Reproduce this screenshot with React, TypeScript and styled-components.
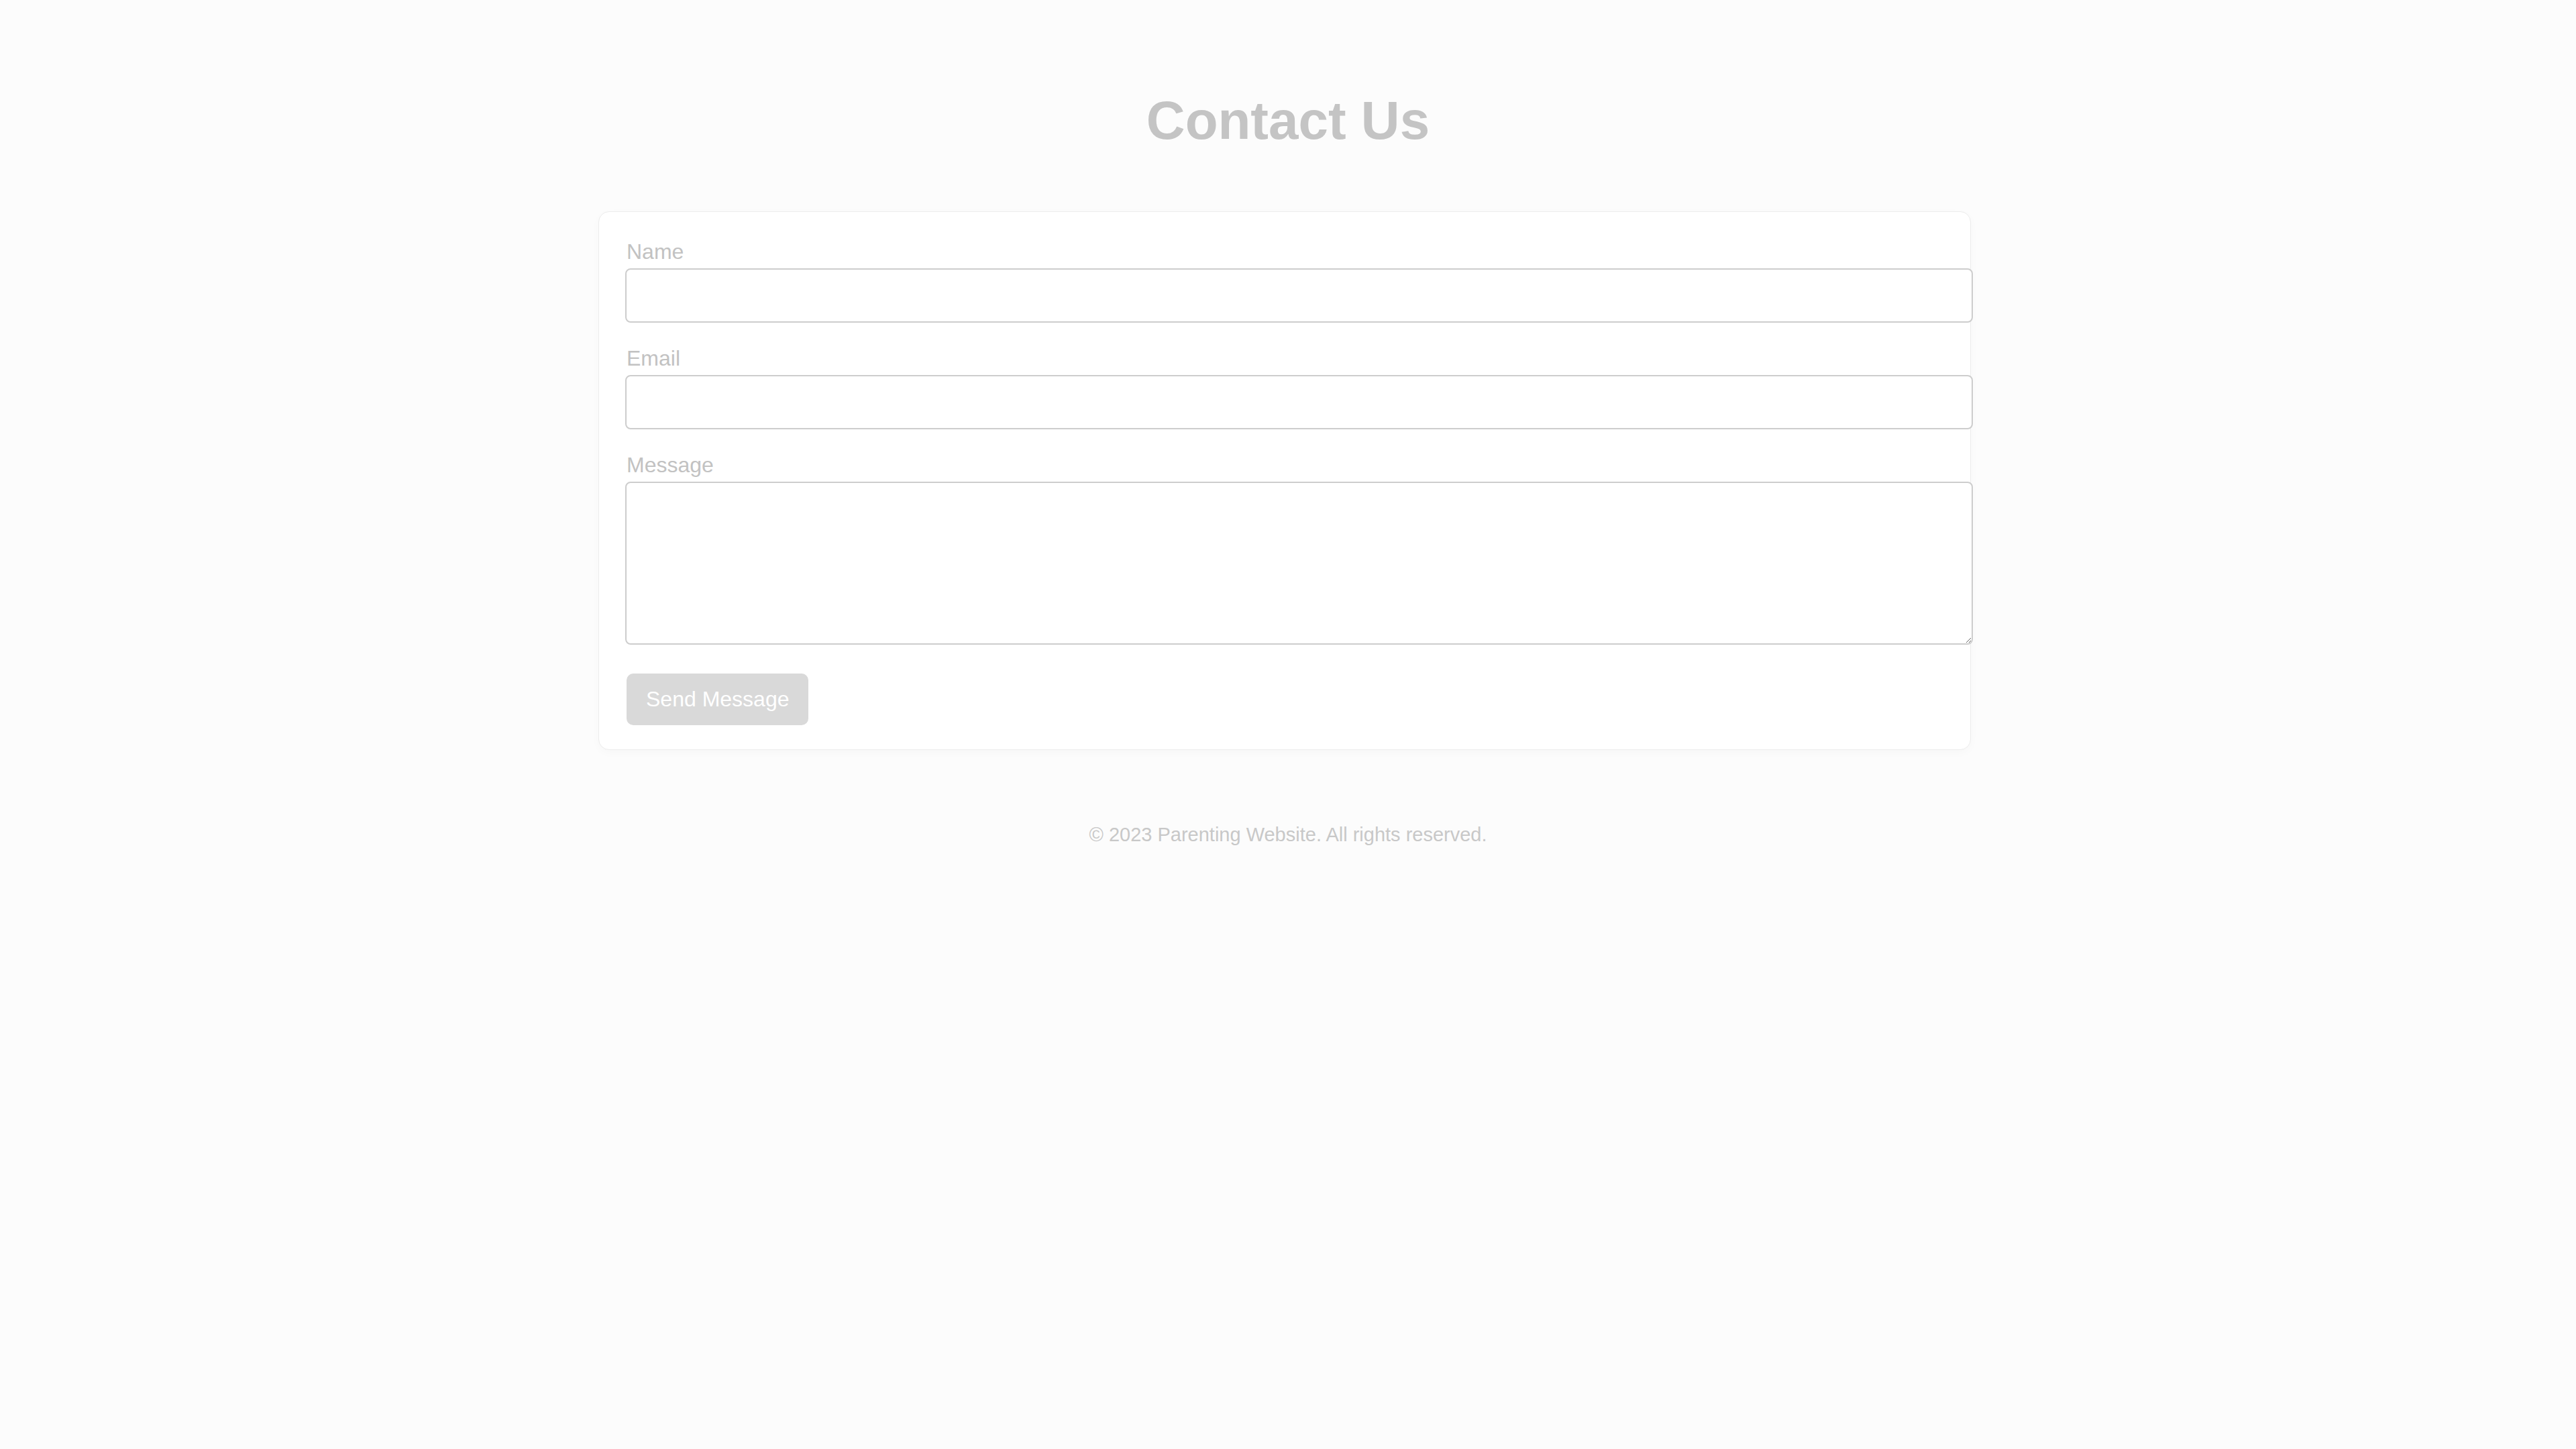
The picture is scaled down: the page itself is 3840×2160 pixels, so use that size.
import styled, { createGlobalStyle } from "styled-components";

const GlobalStyle = createGlobalStyle`
    html, body {
        margin: 0;
        padding: 0;
        background: #fcfcfc;
        font-family: "Liberation Sans", Arial, sans-serif;
    }
`;

const StyledPage = styled.div`
    min-height: 2160px;
    display: flex;
    flex-direction: column;
    align-items: center;
    padding-top: 134px;
    box-sizing: border-box;
`;

const StyledTitle = styled.h1`
    margin: 0 0 89px 0;
    font-size: 80px;
    font-weight: 700;
    line-height: 92px;
    color: #c4c4c4;
    text-align: center;
`;

const StyledCard = styled.form`
    width: 2046px;
    box-sizing: border-box;
    margin-right: 10px;
    padding: 41px 40px 36px 39px;
    background: #ffffff;
    border: 1px solid #ececec;
    border-radius: 16px;
    box-shadow: 0 4px 14px rgba(0, 0, 0, 0.025);
    display: flex;
    flex-direction: column;
`;

const StyledField = styled.div`
    display: flex;
    flex-direction: column;
    margin-bottom: 35px;
`;

const StyledLabel = styled.label`
    font-size: 32px;
    line-height: 37px;
    color: #c2c2c2;
    margin-bottom: 6px;
    padding-left: 2px;
`;

const StyledInput = styled.input`
    width: 100%;
    padding: 20px;
    font-size: 32px;
    line-height: 37px;
    font-family: "Liberation Sans", Arial, sans-serif;
    border: 2px solid #cdcdcd;
    border-radius: 8px;
    background: #ffffff;
    outline: none;
`;

const StyledTextArea = styled.textarea<{ h: number }>`
    width: 100%;
    height: ${(props) => props.h}px;
    padding: 20px;
    font-size: 32px;
    font-family: "Liberation Sans", Arial, sans-serif;
    border: 2px solid #cdcdcd;
    border-radius: 8px;
    background: #ffffff;
    outline: none;
    resize: vertical;
    display: block;
`;

const StyledButton = styled.button`
    align-self: flex-start;
    margin-top: 8px;
    margin-left: 2px;
    background: #d9d9d9;
    color: #ffffff;
    border: none;
    border-radius: 10px;
    padding: 20px 29px;
    font-size: 32px;
    line-height: 37px;
    font-family: "Liberation Sans", Arial, sans-serif;
    cursor: pointer;
`;

const StyledFooter = styled.footer`
    margin-top: 110px;
    font-size: 29px;
    line-height: 33px;
    color: #c8c8c8;
    text-align: center;
`;

const fields = [
    { id: "name", label: "Name", type: "text" },
    { id: "email", label: "Email", type: "email" },
];

export default function App() {
    return (
        <>
            <GlobalStyle />
            <StyledPage>
                <StyledTitle>Contact Us</StyledTitle>
                <StyledCard onSubmit={(e) => e.preventDefault()}>
                    {fields.map((f) => (
                        <StyledField key={f.id}>
                            <StyledLabel htmlFor={f.id}>{f.label}</StyledLabel>
                            <StyledInput id={f.id} type={f.type} />
                        </StyledField>
                    ))}
                    <StyledField>
                        <StyledLabel htmlFor="message">Message</StyledLabel>
                        <StyledTextArea id="message" h={199} />
                    </StyledField>
                    <StyledButton type="submit">Send Message</StyledButton>
                </StyledCard>
                <StyledFooter>© 2023 Parenting Website. All rights reserved.</StyledFooter>
            </StyledPage>
        </>
    );
}
